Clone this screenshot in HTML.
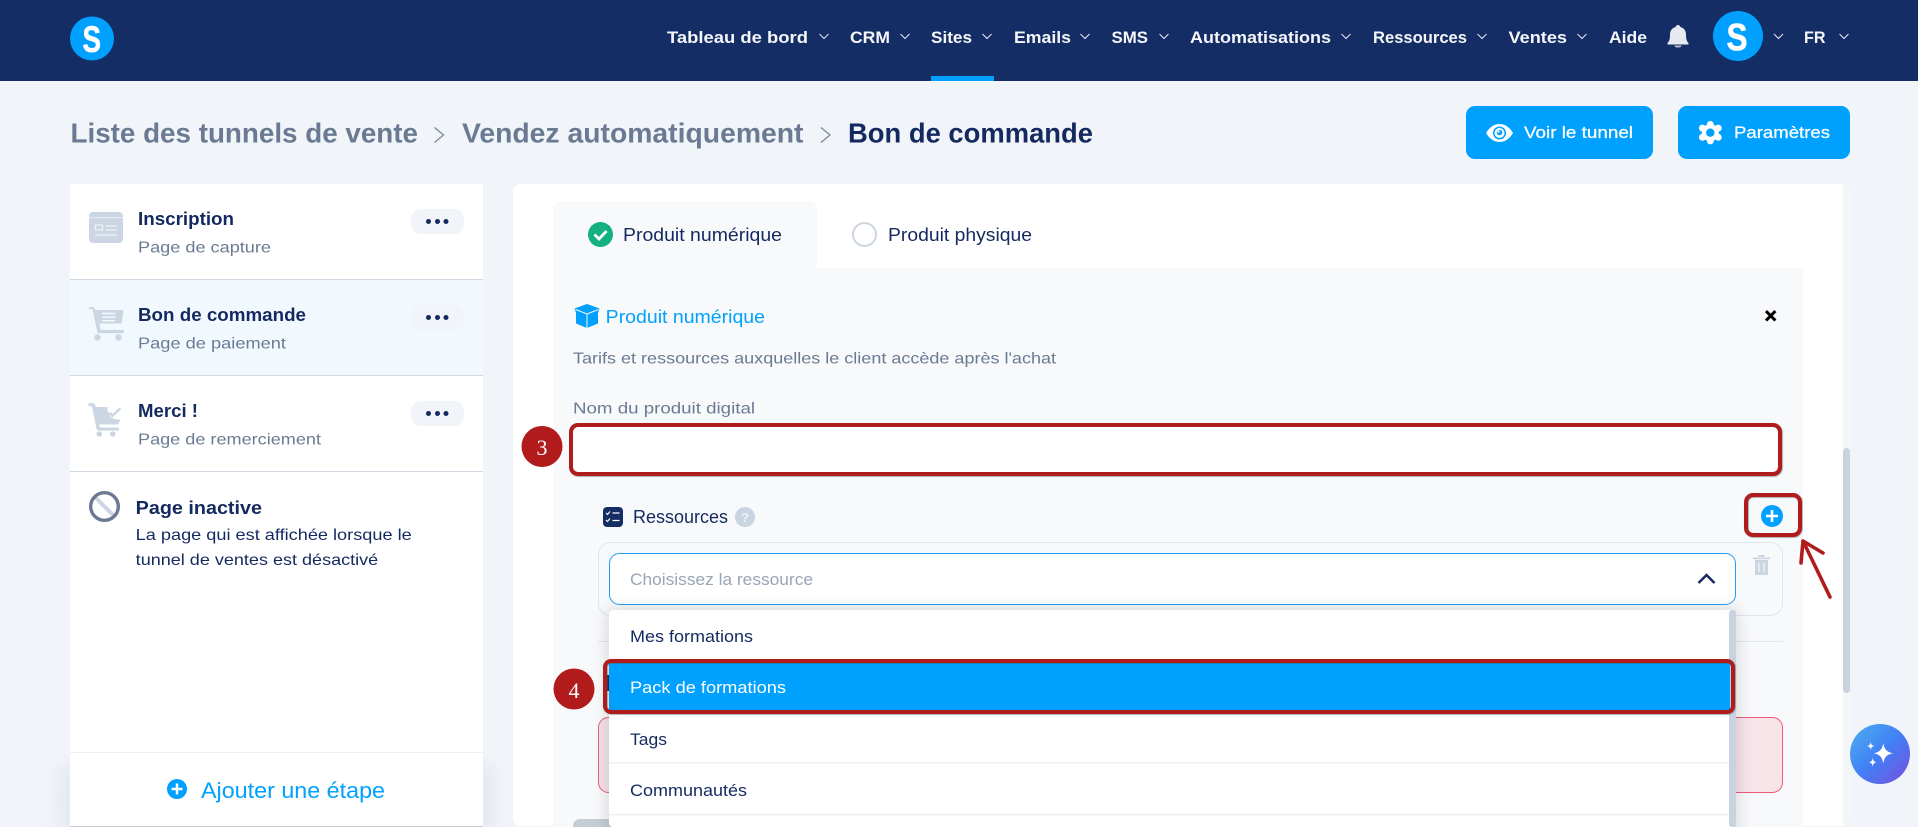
<!DOCTYPE html>
<html lang="fr">
<head>
<meta charset="utf-8">
<title>Bon de commande</title>
<style>
html,body{margin:0;padding:0;width:1918px;height:827px;overflow:hidden;background:#f1f4f9}
svg{display:block;position:absolute;left:0;top:0}
text{font-family:"Liberation Sans",sans-serif}
.nav{font-size:17px;font-weight:700;fill:#f4f6fa}
.bc{font-size:28px;font-weight:700;fill:#6b7a93}
.ti{font-size:18px;font-weight:700;fill:#14295f}
.su{font-size:16px;fill:#6b7a93}
.dk{font-size:17px;fill:#14295f}
.btn{font-size:17px;fill:#fff;stroke:#fff;stroke-width:.25px}
.chev{fill:none;stroke:#e6eaf1;stroke-width:1}
</style>
</head>
<body>
<svg width="1918" height="827" viewBox="0 0 1918 827" xmlns="http://www.w3.org/2000/svg">
<defs>
<filter id="ds" x="-5%" y="-20%" width="110%" height="140%"><feGaussianBlur stdDeviation="9"/></filter>
<filter id="rs" x="-5%" y="-20%" width="110%" height="140%"><feDropShadow dx="0.6" dy="0.6" stdDeviation="0.6" flood-color="#555" flood-opacity=".7"/></filter>
<linearGradient id="spark" x1="0" y1="0" x2="1" y2="1"><stop offset="0" stop-color="#4db0f0"/><stop offset=".5" stop-color="#4180f6"/><stop offset="1" stop-color="#7a4cdc"/></linearGradient>
<linearGradient id="pnk" x1="0" y1="0" x2="1" y2="0"><stop offset="0" stop-color="#f3e3e8"/><stop offset="1" stop-color="#f6e4e9"/></linearGradient>
</defs>

<rect width="1918" height="827" fill="#f1f4f9"/>

<!-- header -->
<rect width="1918" height="81" fill="#152d65"/>
<circle cx="92" cy="38.500" r="22" fill="#00a0ff"/>
<text x="82.500" y="52" font-size="37" font-weight="700" fill="#fff" stroke="#fff" stroke-width=".6" textLength="18.500" lengthAdjust="spacingAndGlyphs">S</text>

<text class="nav" x="667" y="43" textLength="141" lengthAdjust="spacingAndGlyphs">Tableau de bord</text>
<text class="nav" x="850" y="43" textLength="40" lengthAdjust="spacingAndGlyphs">CRM</text>
<text class="nav" x="931" y="43" textLength="41" lengthAdjust="spacingAndGlyphs">Sites</text>
<text class="nav" x="1014" y="43" textLength="57" lengthAdjust="spacingAndGlyphs">Emails</text>
<text class="nav" x="1111.500" y="43" textLength="36.500" lengthAdjust="spacingAndGlyphs">SMS</text>
<text class="nav" x="1190" y="43" textLength="141" lengthAdjust="spacingAndGlyphs">Automatisations</text>
<text class="nav" x="1373" y="43" textLength="94" lengthAdjust="spacingAndGlyphs">Ressources</text>
<text class="nav" x="1508.500" y="43" textLength="58.500" lengthAdjust="spacingAndGlyphs">Ventes</text>
<text class="nav" x="1609" y="43" textLength="38" lengthAdjust="spacingAndGlyphs">Aide</text>
<text class="nav" x="1804" y="43" textLength="21.500" lengthAdjust="spacingAndGlyphs">FR</text>
<path class="chev" d="M819.500 34l4.500 4.500 4.500-4.500M900.500 34l4.500 4.500 4.500-4.500M982.500 34l4.500 4.500 4.500-4.500M1080.500 34l4.500 4.500 4.500-4.500M1159.500 34l4.500 4.500 4.500-4.500M1341.500 34l4.500 4.500 4.500-4.500M1477.500 34l4.500 4.500 4.500-4.500M1577.500 34l4.500 4.500 4.500-4.500M1774 34l4.500 4.500 4.500-4.500M1839.500 34l4.500 4.500 4.500-4.500"/>
<rect x="931" y="76" width="63" height="5" fill="#00a0ff"/>
<!-- bell -->
<path d="M1678 25c1.300 0 2.200 .9 2.400 2 3.800 1 5.600 4 5.600 7.500 0 4.500 .6 6.500 2.500 8.500v1.500h-21v-1.500c1.900-2 2.500-4 2.500-8.500 0-3.500 1.800-6.500 5.600-7.500.2-1.100 1.100-2 2.400-2z" fill="#e6eaf0"/>
<path d="M1674.500 45.500h7c0 1.300-1.300 2-3.500 2s-3.500-.7-3.500-2z" fill="#b9c0cc"/>
<!-- avatar -->
<circle cx="1738" cy="36" r="25" fill="#00a0ff"/>
<text x="1726.500" y="50" font-size="38" font-weight="700" fill="#fff" stroke="#fff" stroke-width=".6" textLength="21" lengthAdjust="spacingAndGlyphs">S</text>

<!-- breadcrumb -->
<text class="bc" x="70.500" y="142.500" textLength="347.500" lengthAdjust="spacingAndGlyphs">Liste des tunnels de vente</text>
<path d="M434.500 127.500l9 7.500-9 7.500" fill="none" stroke="#7c8aa1" stroke-width="1.300"/>
<text class="bc" x="462" y="142.500" textLength="341.500" lengthAdjust="spacingAndGlyphs">Vendez automatiquement</text>
<path d="M821 127.500l9 7.500-9 7.500" fill="none" stroke="#7c8aa1" stroke-width="1.300"/>
<text class="bc" x="848" y="142.500" textLength="245" lengthAdjust="spacingAndGlyphs" style="fill:#14295f">Bon de commande</text>

<!-- top buttons -->
<rect x="1466" y="106" width="187" height="53" rx="9" fill="#00a0ff"/>
<path d="M1486 133c3.500-5.800 8-9 13.500-9s10 3.200 13.500 9c-3.500 5.800-8 9-13.500 9s-10-3.200-13.500-9z" fill="#fff"/>
<circle cx="1499.500" cy="133" r="6.500" fill="#00a0ff"/><circle cx="1499.500" cy="133" r="5" fill="#fff"/><circle cx="1499.500" cy="132.500" r="2.800" fill="#00a0ff"/><circle cx="1498.500" cy="131.500" r="1.200" fill="#fff"/>
<text class="btn" x="1524" y="138" textLength="109" lengthAdjust="spacingAndGlyphs">Voir le tunnel</text>
<rect x="1678" y="106" width="172" height="53" rx="9" fill="#00a0ff"/>
<g transform="translate(1710.300 132.700)" fill="#fff">
<circle r="8.500"/>
<circle cx="0" cy="-8.200" r="3.500"/><circle cx="0" cy="8.200" r="3.500"/>
<circle cx="7.900" cy="-4.600" r="3.500"/><circle cx="-7.900" cy="-4.600" r="3.500"/>
<circle cx="7.900" cy="4.600" r="3.500"/><circle cx="-7.900" cy="4.600" r="3.500"/>
<circle r="4.200" fill="#00a0ff"/>
</g>
<text class="btn" x="1734" y="138" textLength="96" lengthAdjust="spacingAndGlyphs">Paramètres</text>

<!-- sidebar -->
<rect x="60" y="765" width="433" height="70" fill="#c9d1de" opacity=".35" filter="url(#ds)"/>
<rect x="70" y="184" width="413" height="643" fill="#fff"/>
<rect x="70" y="280" width="413" height="95" fill="#f1f9ff"/>
<rect x="70" y="279" width="413" height="1" fill="#cfd8e3"/>
<rect x="70" y="375" width="413" height="1" fill="#cfd8e3"/>
<rect x="70" y="471" width="413" height="1" fill="#cfd8e3"/>

<!-- inscription icon -->
<rect x="89" y="212" width="34" height="31" rx="4" fill="#ccd6e3"/>
<rect x="89" y="217" width="34" height="1.200" fill="#e6ebf2"/>
<rect x="95.500" y="225" width="7" height="5" fill="none" stroke="#eef2f6" stroke-width="1.200"/>
<path d="M106 226h11M106 230h11M95 235h22" stroke="#eef2f6" stroke-width="1.200"/>
<text class="ti" x="138" y="225" textLength="96" lengthAdjust="spacingAndGlyphs">Inscription</text>
<text class="su" x="138" y="252.500" textLength="133" lengthAdjust="spacingAndGlyphs">Page de capture</text>
<rect x="411" y="209" width="53" height="25" rx="10" fill="#f1f4f8"/>
<g fill="#14295f"><circle cx="428.500" cy="221.500" r="2.500"/><circle cx="437.500" cy="221.500" r="2.500"/><circle cx="446" cy="221.500" r="2.500"/></g>

<!-- cart icon -->
<path d="M89 307h4.500l2 3h28l-1.800 13.500h-22.200l1.300 6.500h22.900v3.200h-26.200l-4.700-23.300c-.2-.7-.5-.9-1.200-.9h-2.600z" fill="#ccd6e3"/>
<circle cx="97.500" cy="337.500" r="3.200" fill="#ccd6e3"/><circle cx="118.500" cy="337.500" r="3.200" fill="#ccd6e3"/>
<path d="M102 313.500h13.500M102 317.200h13.500M102.500 320.700h12.500" stroke="#f1f9ff" stroke-width="1.500"/>
<text class="ti" x="138" y="321" textLength="168" lengthAdjust="spacingAndGlyphs">Bon de commande</text>
<text class="su" x="138" y="348.500" textLength="148" lengthAdjust="spacingAndGlyphs">Page de paiement</text>
<rect x="411" y="305" width="53" height="25" rx="10" fill="#f1f4f8"/>
<g fill="#14295f"><circle cx="428.500" cy="317.500" r="2.500"/><circle cx="437.500" cy="317.500" r="2.500"/><circle cx="446" cy="317.500" r="2.500"/></g>

<!-- merci icon -->
<path d="M89 403h3.500c1.500 0 2.500 1 3 3l.3 1h11.700c-.5 8 5 13.500 13 12.500l-1.500 3.500c-.4 1-1.200 1.500-2.300 1.500h-17.700l.4 1.800c.2 .8.6 1.200 1.400 1.200h18v3h-19c-2 0-3-1-3.500-2.500l-4-20c-.3-1.500-1-2-2-2h-2.300z" fill="#ccd6e3"/>
<circle cx="99.300" cy="434" r="2.800" fill="#ccd6e3"/><circle cx="112.700" cy="434" r="2.800" fill="#ccd6e3"/>
<path d="M109.300 412.500l3.200 3.200 8-7.500" fill="none" stroke="#ccd6e3" stroke-width="2.400"/>
<text class="ti" x="138" y="417" textLength="60" lengthAdjust="spacingAndGlyphs">Merci !</text>
<text class="su" x="138" y="444.500" textLength="183" lengthAdjust="spacingAndGlyphs">Page de remerciement</text>
<rect x="411" y="401" width="53" height="25" rx="10" fill="#f1f4f8"/>
<g fill="#14295f"><circle cx="428.500" cy="413.500" r="2.500"/><circle cx="437.500" cy="413.500" r="2.500"/><circle cx="446" cy="413.500" r="2.500"/></g>

<!-- inactive -->
<path d="M95 497l19 19" stroke="#ccd6e3" stroke-width="4"/>
<circle cx="104.500" cy="506.500" r="13.800" fill="none" stroke="#6b7a93" stroke-width="3.400"/>
<text class="ti" x="135.700" y="514" textLength="126.300" lengthAdjust="spacingAndGlyphs">Page inactive</text>
<text class="su" x="135.700" y="540" textLength="276" lengthAdjust="spacingAndGlyphs" style="fill:#14295f">La page qui est affichée lorsque le</text>
<text class="su" x="135.700" y="565" textLength="242.500" lengthAdjust="spacingAndGlyphs" style="fill:#14295f">tunnel de ventes est désactivé</text>

<!-- footer -->
<rect x="70" y="752" width="413" height="1" fill="#eceff3"/>
<rect x="70" y="826" width="413" height="1" fill="#c9ced6"/>
<circle cx="177" cy="789" r="10" fill="#00a0ff"/>
<path d="M171.500 789h11M177 783.500v11" stroke="#fff" stroke-width="2.400"/>
<text x="201" y="798" font-size="22" fill="#00a0ff" textLength="184" lengthAdjust="spacingAndGlyphs">Ajouter une étape</text>

<!-- main panel -->
<rect x="513" y="184" width="1337" height="642" rx="8" fill="#fff"/>
<path d="M1843 184h1a6 6 0 0 1 6 6v630a6 6 0 0 1-6 6h-1z" fill="#f5f6f8"/>
<rect x="1843" y="448" width="7" height="245" rx="3.500" fill="#c9d3e0"/>

<!-- tabs -->
<path d="M553 827V209a8 8 0 0 1 8-8h248a8 8 0 0 1 8 8v59h986v559z" fill="#f8f9fb"/>
<circle cx="600.500" cy="234.500" r="12.500" fill="#14b07f"/>
<path d="M594.500 234.500l4.500 4.500 7.500-8" fill="none" stroke="#fff" stroke-width="2.800"/>
<text class="dk" x="623" y="241" textLength="159" lengthAdjust="spacingAndGlyphs" style="font-size:18px">Produit numérique</text>
<circle cx="864.500" cy="234.500" r="11.500" fill="#fff" stroke="#cdd6e2" stroke-width="2"/>
<text class="dk" x="888" y="241" textLength="144" lengthAdjust="spacingAndGlyphs" style="font-size:18px">Produit physique</text>

<!-- section title -->
<path d="M587 304l12.500 4.500-1.500 4.500v10.500l-11 4.500-11-4.500v-10.500l-1.500-4.500z" fill="#00a0ff"/>
<path d="M575.500 309.500l11.500 4.500 11.500-4.500M587 314v14" fill="none" stroke="#f8f9fb" stroke-width="1"/>
<text x="605.700" y="323" font-size="18" fill="#00a0ff" textLength="159.300" lengthAdjust="spacingAndGlyphs">Produit numérique</text>
<path d="M1766 311.100l9.400 9.400M1775.400 311.100l-9.400 9.400" stroke="#000" stroke-width="3"/>
<text class="su" x="573" y="363.500" textLength="483" lengthAdjust="spacingAndGlyphs">Tarifs et ressources auxquelles le client accède après l'achat</text>
<text class="su" x="573" y="413.500" textLength="182" lengthAdjust="spacingAndGlyphs">Nom du produit digital</text>

<!-- name input -->
<rect x="571" y="425" width="1209" height="49" rx="7" fill="#fff" stroke="#b01c1c" stroke-width="4" filter="url(#rs)"/>
<circle cx="542" cy="446.500" r="20.500" fill="#b11b1b"/>
<text x="542" y="455" font-size="22" text-anchor="middle" style="font-family:'Liberation Serif',serif" fill="#fff">3</text>

<!-- ressources -->
<rect x="603" y="507" width="20" height="20" rx="4" fill="#152d65"/>
<path d="M606 513l1.500 1.500 2.500-3M606 520l1.500 1.500 2.500-3" fill="none" stroke="#fff" stroke-width="1.100"/>
<path d="M612.500 513h7M612.500 520.500h7" stroke="#fff" stroke-width="1.300"/>
<text class="dk" x="633" y="523" textLength="95" lengthAdjust="spacingAndGlyphs" style="font-size:18px">Ressources</text>
<circle cx="745" cy="517" r="10" fill="#c9d4e2"/>
<text x="741" y="522" font-size="13" font-weight="700" fill="#eef2f7" textLength="8" lengthAdjust="spacingAndGlyphs">?</text>

<circle cx="1772" cy="516" r="11" fill="#00a0ff"/>
<path d="M1766 516h12M1772 510v12" stroke="#fff" stroke-width="2.600"/>
<rect x="1746" y="495" width="54" height="40" rx="7" fill="none" stroke="#b01c1c" stroke-width="4" filter="url(#rs)"/>
<path d="M1830 597l-27-56M1803 541l20 12M1803 541l-2 22" fill="none" stroke="#b01c1c" stroke-width="3.600" stroke-linecap="round"/>

<rect x="598.500" y="542.500" width="1184" height="73" rx="12" fill="#f8f9fb" stroke="#e1e5ea"/>
<rect x="609.500" y="553.500" width="1126" height="51" rx="10" fill="#fff" stroke="#1ea0f5"/>
<text x="630" y="585" font-size="17" fill="#9aa5b5" textLength="183" lengthAdjust="spacingAndGlyphs">Choisissez la ressource</text>
<path d="M1698.500 583l8-8 8 8" fill="none" stroke="#14295f" stroke-width="2.500"/>
<path d="M1755 560h13v15h-13z" fill="#ccd6e3"/>
<path d="M1753 557.500h17v1.800h-17zM1758.500 555h6v2h-6z" fill="#ccd6e3"/>
<path d="M1759 563v9M1764 563v9" stroke="#f8f9fb" stroke-width="1.200"/>

<rect x="598" y="641" width="1185" height="1" fill="#e5e8ee"/>
<rect x="598.500" y="717.500" width="1184" height="75" rx="10" fill="url(#pnk)" stroke="#ef5b78"/>
<path d="M573 827v-1a7 7 0 0 1 7-7h40v8z" fill="#c5ced6"/>
<rect x="605" y="675" width="6" height="16" fill="#152d65"/>

<!-- dropdown -->
<rect x="609" y="610" width="1127" height="240" fill="#000" opacity=".16" filter="url(#ds)"/>
<rect x="609" y="610" width="1127" height="217" rx="4" fill="#fff"/>
<rect x="1729" y="610" width="7" height="217" rx="3" fill="#c9d3e0"/>
<text class="dk" x="630" y="642" textLength="123" lengthAdjust="spacingAndGlyphs">Mes formations</text>
<rect x="609" y="663" width="1121" height="47" fill="#00a0ff"/>
<text x="630" y="693" font-size="17" fill="#fff" textLength="156" lengthAdjust="spacingAndGlyphs">Pack de formations</text>
<rect x="605" y="661" width="1128" height="51" rx="6" fill="none" stroke="#b01c1c" stroke-width="4" filter="url(#rs)"/>
<text class="dk" x="630" y="745" textLength="37" lengthAdjust="spacingAndGlyphs">Tags</text>
<rect x="609" y="762" width="1120" height="1.500" fill="#eceff3"/>
<text class="dk" x="630" y="796" textLength="117" lengthAdjust="spacingAndGlyphs">Communautés</text>
<rect x="609" y="814" width="1120" height="1.500" fill="#eceff3"/>
<circle cx="574" cy="689" r="20.500" fill="#b11b1b"/>
<text x="574" y="698" font-size="22" text-anchor="middle" style="font-family:'Liberation Serif',serif" fill="#fff">4</text>

<!-- sparkle -->
<circle cx="1880" cy="754" r="30" fill="url(#spark)"/>
<path d="M1883.300 743c1 6 3 9 9.700 10.300-6.700 1.300-8.700 4.300-9.700 10.300-1-6-3-9-9.700-10.300 6.700-1.300 8.700-4.300 9.700-10.300z" fill="#fff"/>
<path d="M1870.700 742c.5 2.700 1.300 3.500 3.800 4-2.500.5-3.300 1.300-3.800 4-.5-2.700-1.300-3.500-3.800-4 2.500-.5 3.300-1.300 3.800-4zM1872.700 758c.5 3 1.500 3.800 4 4.300-2.500.5-3.500 1.300-4 4.300-.5-3-1.500-3.800-4-4.300 2.500-.5 3.500-1.300 4-4.300z" fill="#fff"/>
</svg>
</body>
</html>
